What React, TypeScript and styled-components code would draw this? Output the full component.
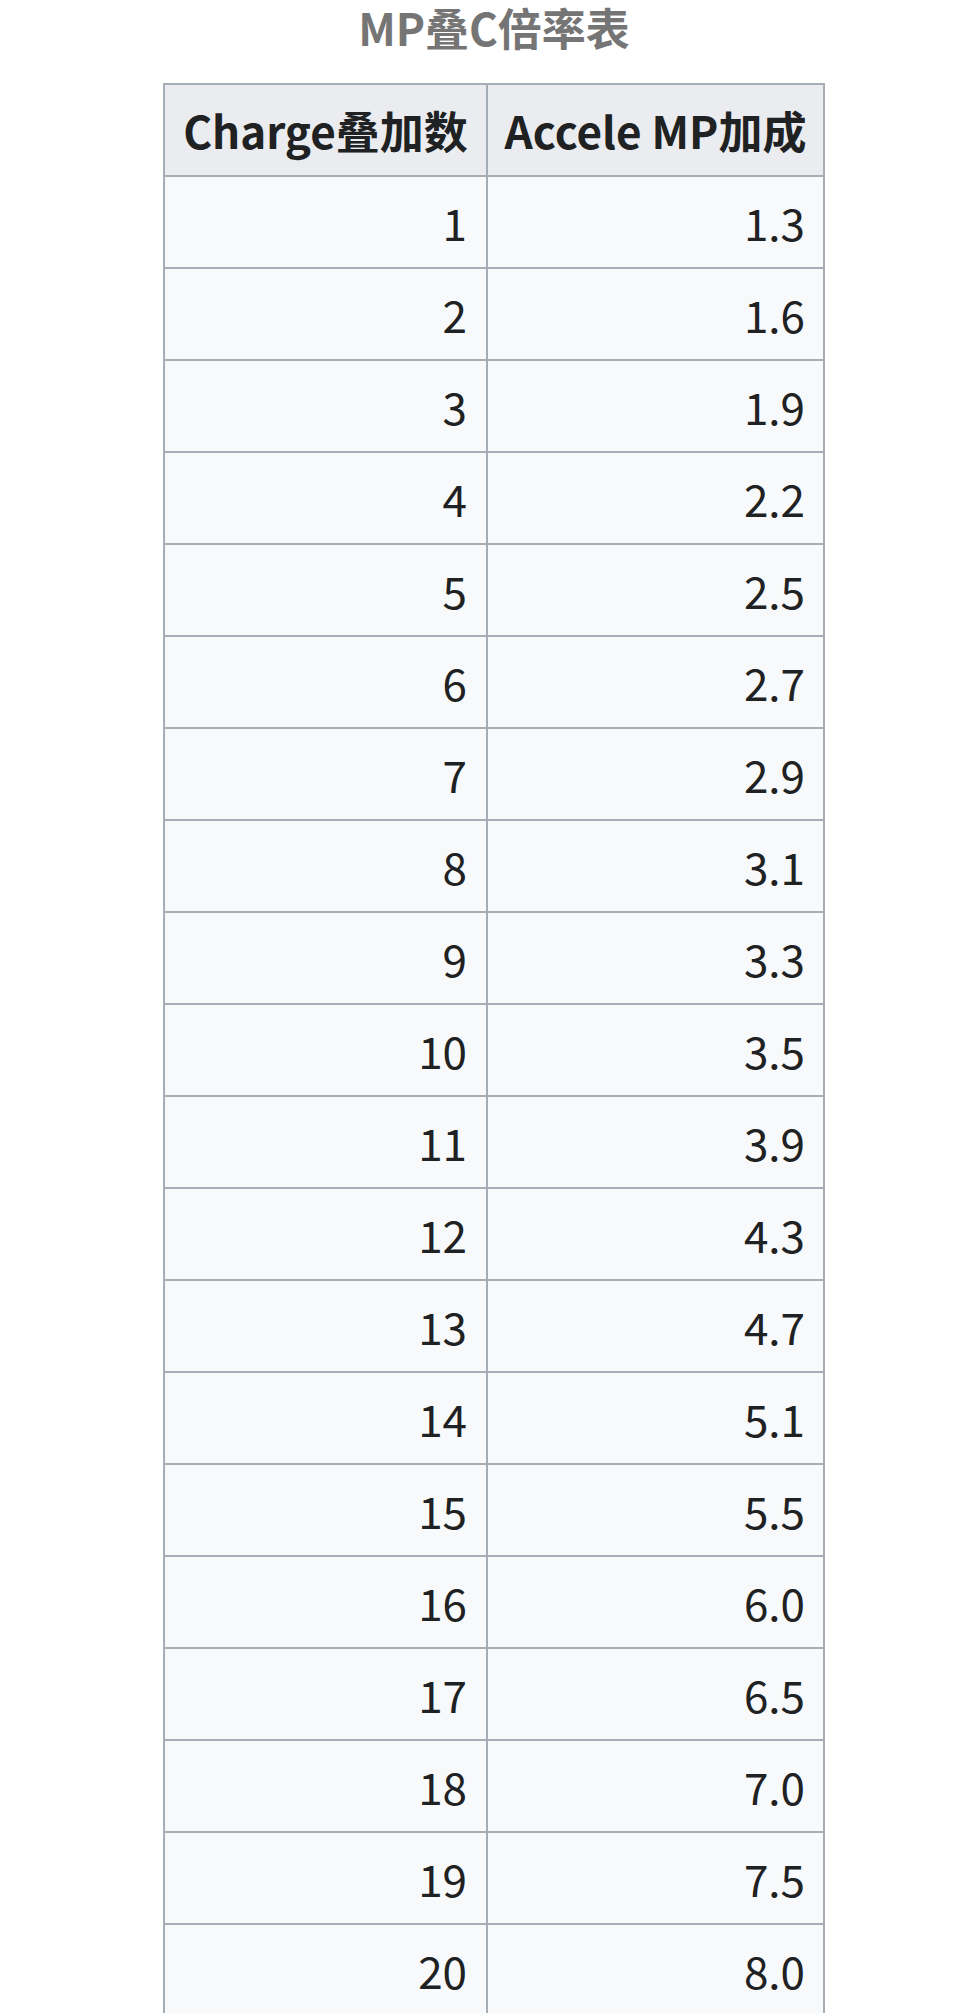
import React from "react";
import styled, { createGlobalStyle } from "styled-components";

const GlobalStyle = createGlobalStyle`
  html, body {
    margin: 0;
    padding: 0;
    background: #ffffff;
  }
  body {
    font-family: "Noto Sans CJK SC", "Noto Sans", sans-serif;
    color: #202122;
  }
`;

const rows: [number, string][] = [
  [1, "1.3"],
  [2, "1.6"],
  [3, "1.9"],
  [4, "2.2"],
  [5, "2.5"],
  [6, "2.7"],
  [7, "2.9"],
  [8, "3.1"],
  [9, "3.3"],
  [10, "3.5"],
  [11, "3.9"],
  [12, "4.3"],
  [13, "4.7"],
  [14, "5.1"],
  [15, "5.5"],
  [16, "6.0"],
  [17, "6.5"],
  [18, "7.0"],
  [19, "7.5"],
  [20, "8.0"],
];

const Page = styled.div`
  display: flex;
  flex-direction: column;
  align-items: center;
  padding-left: 14px;
`;

const Table = styled.table`
  border-collapse: collapse;
  background: #f8f9fa;
  border: 2px solid #a7adb4;
  font-size: 44px;
  line-height: 60px;
`;

const Caption = styled.caption`
  font-weight: bold;
  color: #757575;
  font-size: 44px;
  line-height: 54px;
  padding-bottom: 29px;
  text-align: center;
`;

const HeadCell = styled.th<{ $w: number }>`
  width: ${(p) => p.$w}px;
  box-sizing: border-box;
  height: 92px;
  padding: 0 16px;
  background: #eaecf0;
  border: 2px solid #a7adb4;
  font-weight: bold;
  text-align: center;
  white-space: nowrap;
`;

const Cell = styled.td<{ $pr: number }>`
  height: 92px;
  box-sizing: border-box;
  padding: 0 ${(p) => p.$pr}px 0 16px;
  border: 2px solid #a7adb4;
  text-align: right;
`;

export default function App() {
  return (
    <>
      <GlobalStyle />
      <Page>
        <Table>
          <Caption>MP叠C倍率表</Caption>
          <thead>
            <tr>
              <HeadCell $w={323}>Charge叠加数</HeadCell>
              <HeadCell $w={337}>Accele MP加成</HeadCell>
            </tr>
          </thead>
          <tbody>
            {rows.map(([n, v]) => (
              <tr key={n}>
                <Cell $pr={19}>{n}</Cell>
                <Cell $pr={18}>{v}</Cell>
              </tr>
            ))}
          </tbody>
        </Table>
      </Page>
    </>
  );
}
